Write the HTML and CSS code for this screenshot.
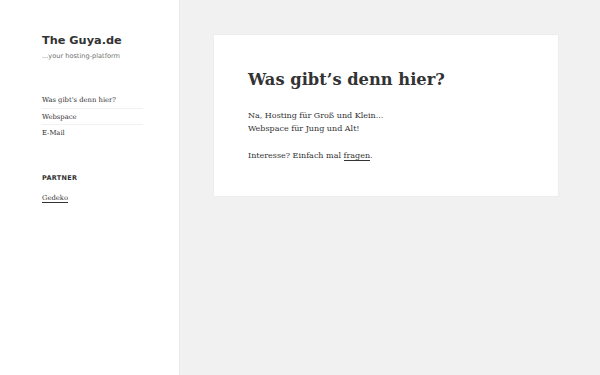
FILE: index.html
```html
<!DOCTYPE html>
<html lang="de">
<head>
<meta charset="utf-8">
<title>The Guya.de</title>
<link rel="stylesheet" href="styles.css">
</head>
<body>
<div class="page">
  <aside class="sidebar">
    <div class="branding">
      <p class="site-title">The Guya.de</p>
      <p class="site-desc">...your hosting-platform</p>
    </div>
    <nav class="menu">
      <ul>
        <li><a href="#">Was gibt's denn hier?</a></li>
        <li><a href="#">Webspace</a></li>
        <li><a href="#">E-Mail</a></li>
      </ul>
    </nav>
    <div class="widget">
      <h2 class="widget-title">PARTNER</h2>
      <a class="partner" href="#">Gedeko</a>
    </div>
  </aside>
  <main class="content">
    <article class="card">
      <h1 class="entry-title">Was gibt’s denn hier?</h1>
      <p>Na, Hosting für Groß und Klein...<br>Webspace für Jung und Alt!</p>
      <p>Interesse? Einfach mal <a href="#">fragen</a>.</p>
    </article>
  </main>
</div>
</body>
</html>
```
FILE: styles.css
```css
* { box-sizing: border-box; }
html, body { margin: 0; padding: 0; height: 100%; }
body {
  background: #f1f1f1;
  color: #333;
  font-family: "DejaVu Serif", serif;
}
.page {
  display: flex;
  min-height: 375px;
}
.sidebar {
  width: 179px;
  flex: 0 0 179px;
  background: #fff;
  padding: 33px 36px 0 42px;
  box-shadow: 0 0 1px rgba(0,0,0,0.15);
}
.branding p { margin: 0; }
.site-title {
  font-family: "DejaVu Sans", sans-serif;
  font-weight: bold;
  font-size: 11.3px;
  line-height: 16px;
  color: #333;
}
.site-desc {
  font-family: "DejaVu Sans", sans-serif;
  font-size: 6.6px;
  line-height: 10px;
  color: #707070;
  margin-top: 2px !important;
}
.menu { margin-top: 31px; }
.menu ul { list-style: none; margin: 0; padding: 0; }
.menu li {
  border-top: 1px solid #f1f1f1;
  font-size: 6.8px;
  line-height: 10px;
  padding: 3px 0 2.5px;
}
.menu li:first-child { border-top: 0; }
.menu a { color: #333; text-decoration: none; }
.widget {
  margin-top: 32px;
  font-size: 6.8px;
  line-height: 10px;
}
.widget-title {
  font-family: "DejaVu Sans", sans-serif;
  font-weight: bold;
  font-size: 6.5px;
  letter-spacing: 0.3px;
  line-height: 10px;
  margin: 0 0 10px;
  color: #333;
}
.partner {
  color: #333;
  text-decoration: none;
  border-bottom: 1px solid #333;
}
.content {
  flex: 1;
  padding: 35px 42px 0 35px;
}
.card {
  background: #fff;
  padding: 33px 34px 27px;
  min-height: 161px;
  box-shadow: 0 0 1px rgba(0,0,0,0.1);
}
.entry-title {
  font-size: 16.3px;
  line-height: 24px;
  margin: 0 0 17px;
  font-weight: bold;
  color: #333;
}
.card p {
  font-size: 8px;
  line-height: 13.3px;
  margin: 0 0 13.3px;
  color: #333;
}
.card p:last-child { margin-bottom: 0; }
.card a {
  color: #333;
  text-decoration: none;
  border-bottom: 1px solid #333;
}
```
